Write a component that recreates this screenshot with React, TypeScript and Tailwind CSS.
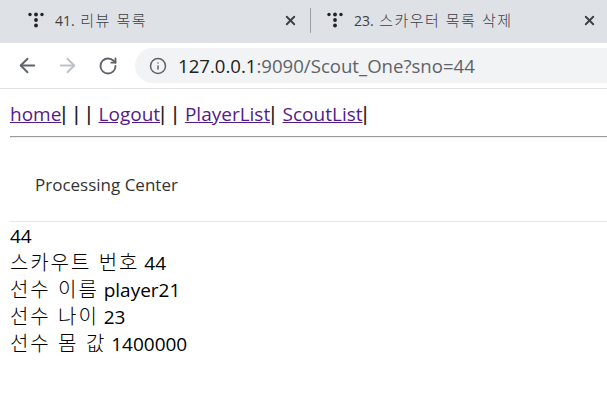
import type { ReactNode } from 'react';
import { ArrowLeft, ArrowRight, RotateCw, Info, X } from 'lucide-react';

function TabLogo() {
    return (
        <svg width="16" height="16" viewBox="0 0 16 16" className="shrink-0 text-[#222]" fill="currentColor">
            <circle cx="2" cy="2.5" r="1.7" />
            <circle cx="8" cy="2.5" r="1.9" />
            <circle cx="14" cy="2.5" r="1.7" />
            <circle cx="8" cy="8" r="1.9" />
            <circle cx="8" cy="13.5" r="1.9" />
        </svg>
    );
}

// hangul runs are set a bit wider than the latin next to them
function Ko({ children }: { children: ReactNode }) {
    return <span className="font-['Noto_Sans_CJK_KR',sans-serif] text-[20px] leading-none font-light tracking-[1.9px] [word-spacing:1.2px]">{children}</span>;
}

function TabKo({ children }: { children: ReactNode }) {
    return <span className="ml-[2px] font-['Noto_Sans_CJK_KR',sans-serif] text-[15px] leading-none font-light tracking-[1.4px] [word-spacing:1px]">{children}</span>;
}

function Tab({ num, title, divider }: { num: string; title: string; divider?: boolean }) {
    return (
        <div className="flex h-[30px] w-[299px] shrink-0 items-center">
            <div className={`mr-[16px] h-[25px] w-px shrink-0 ${divider ? 'bg-[#9aa0a6]' : 'bg-transparent'}`} />
            <TabLogo />
            <span className="ml-[11px] flex-1 text-[14px] whitespace-pre text-[#3c4043]">
                {num} <TabKo>{title}</TabKo>
            </span>
            <X size={15} strokeWidth={3} className="mr-[12px] shrink-0 text-[#3c4043]" />
        </div>
    );
}

function Link({ children }: { children: string }) {
    return <a href="#" className="text-[#551a8b] underline">{children}</a>;
}

function Pipes({ children }: { children: string }) {
    return <span className="font-['Liberation_Sans',sans-serif] text-[20px] leading-none font-light tracking-[0.55px] [word-spacing:0.55px] text-[#222]">{children}</span>;
}

export default function App() {
    return (
        <div className="h-[416px] w-[607px] overflow-hidden bg-white font-['Open_Sans','Noto_Sans_CJK_KR',sans-serif]">
            <div className="flex h-[43px] items-center bg-[#dee1e6] pb-[3px] pl-[11px]">
                <Tab num="41." title="리뷰 목록" />
                <Tab num="23." title="스카우터 목록 삭제" divider />
            </div>
            <div className="flex h-[46px] items-center border-b border-[#e0e0e0] pl-[16px]">
                <ArrowLeft size={23} strokeWidth={2} className="text-[#5f6368]" />
                <ArrowRight size={23} strokeWidth={2} className="ml-[17px] text-[#bdc1c6]" />
                <RotateCw size={20} strokeWidth={2.2} className="ml-[19px] text-[#5f6368]" />
                <div className="ml-[17px] flex h-[35px] flex-1 items-center rounded-l-full bg-[#f1f3f4] pl-[14px]">
                    <Info size={18} strokeWidth={2} className="text-[#5f6368]" />
                    <span className="ml-[11px] text-[18.6px] whitespace-nowrap text-[#5f6368]">
                        <span className="text-[#202124]">127.0.0.1</span>:9090/Scout_One?sno=44
                    </span>
                </div>
            </div>
            <div className="pl-[10px] text-[19px] leading-[27px] text-black">
                <div className="mt-[12px] h-[27px] whitespace-pre">
                    <Link>home</Link><Pipes>| | | </Pipes><Link>Logout</Link><Pipes>| | </Pipes><Link>PlayerList</Link><Pipes>| </Pipes><Link>ScoutList</Link><Pipes>|</Pipes>
                </div>
                <div className="mt-[8px] h-[2px] border-t border-b border-t-[#9a9a9a] border-b-[#eeeeee]" />
                <div className="flex h-[83px] items-center pl-[25px] pt-[9px] text-[17px] text-[#333]">Processing Center</div>
                <div className="h-px bg-[#e7e7e7]" />
                <div className="pt-px">44</div>
                <div><Ko>스카우트 번호</Ko> 44</div>
                <div><Ko>선수 이름</Ko> player21</div>
                <div><Ko>선수 나이</Ko> 23</div>
                <div><Ko>선수 몸 값</Ko> 1400000</div>
            </div>
        </div>
    );
}
